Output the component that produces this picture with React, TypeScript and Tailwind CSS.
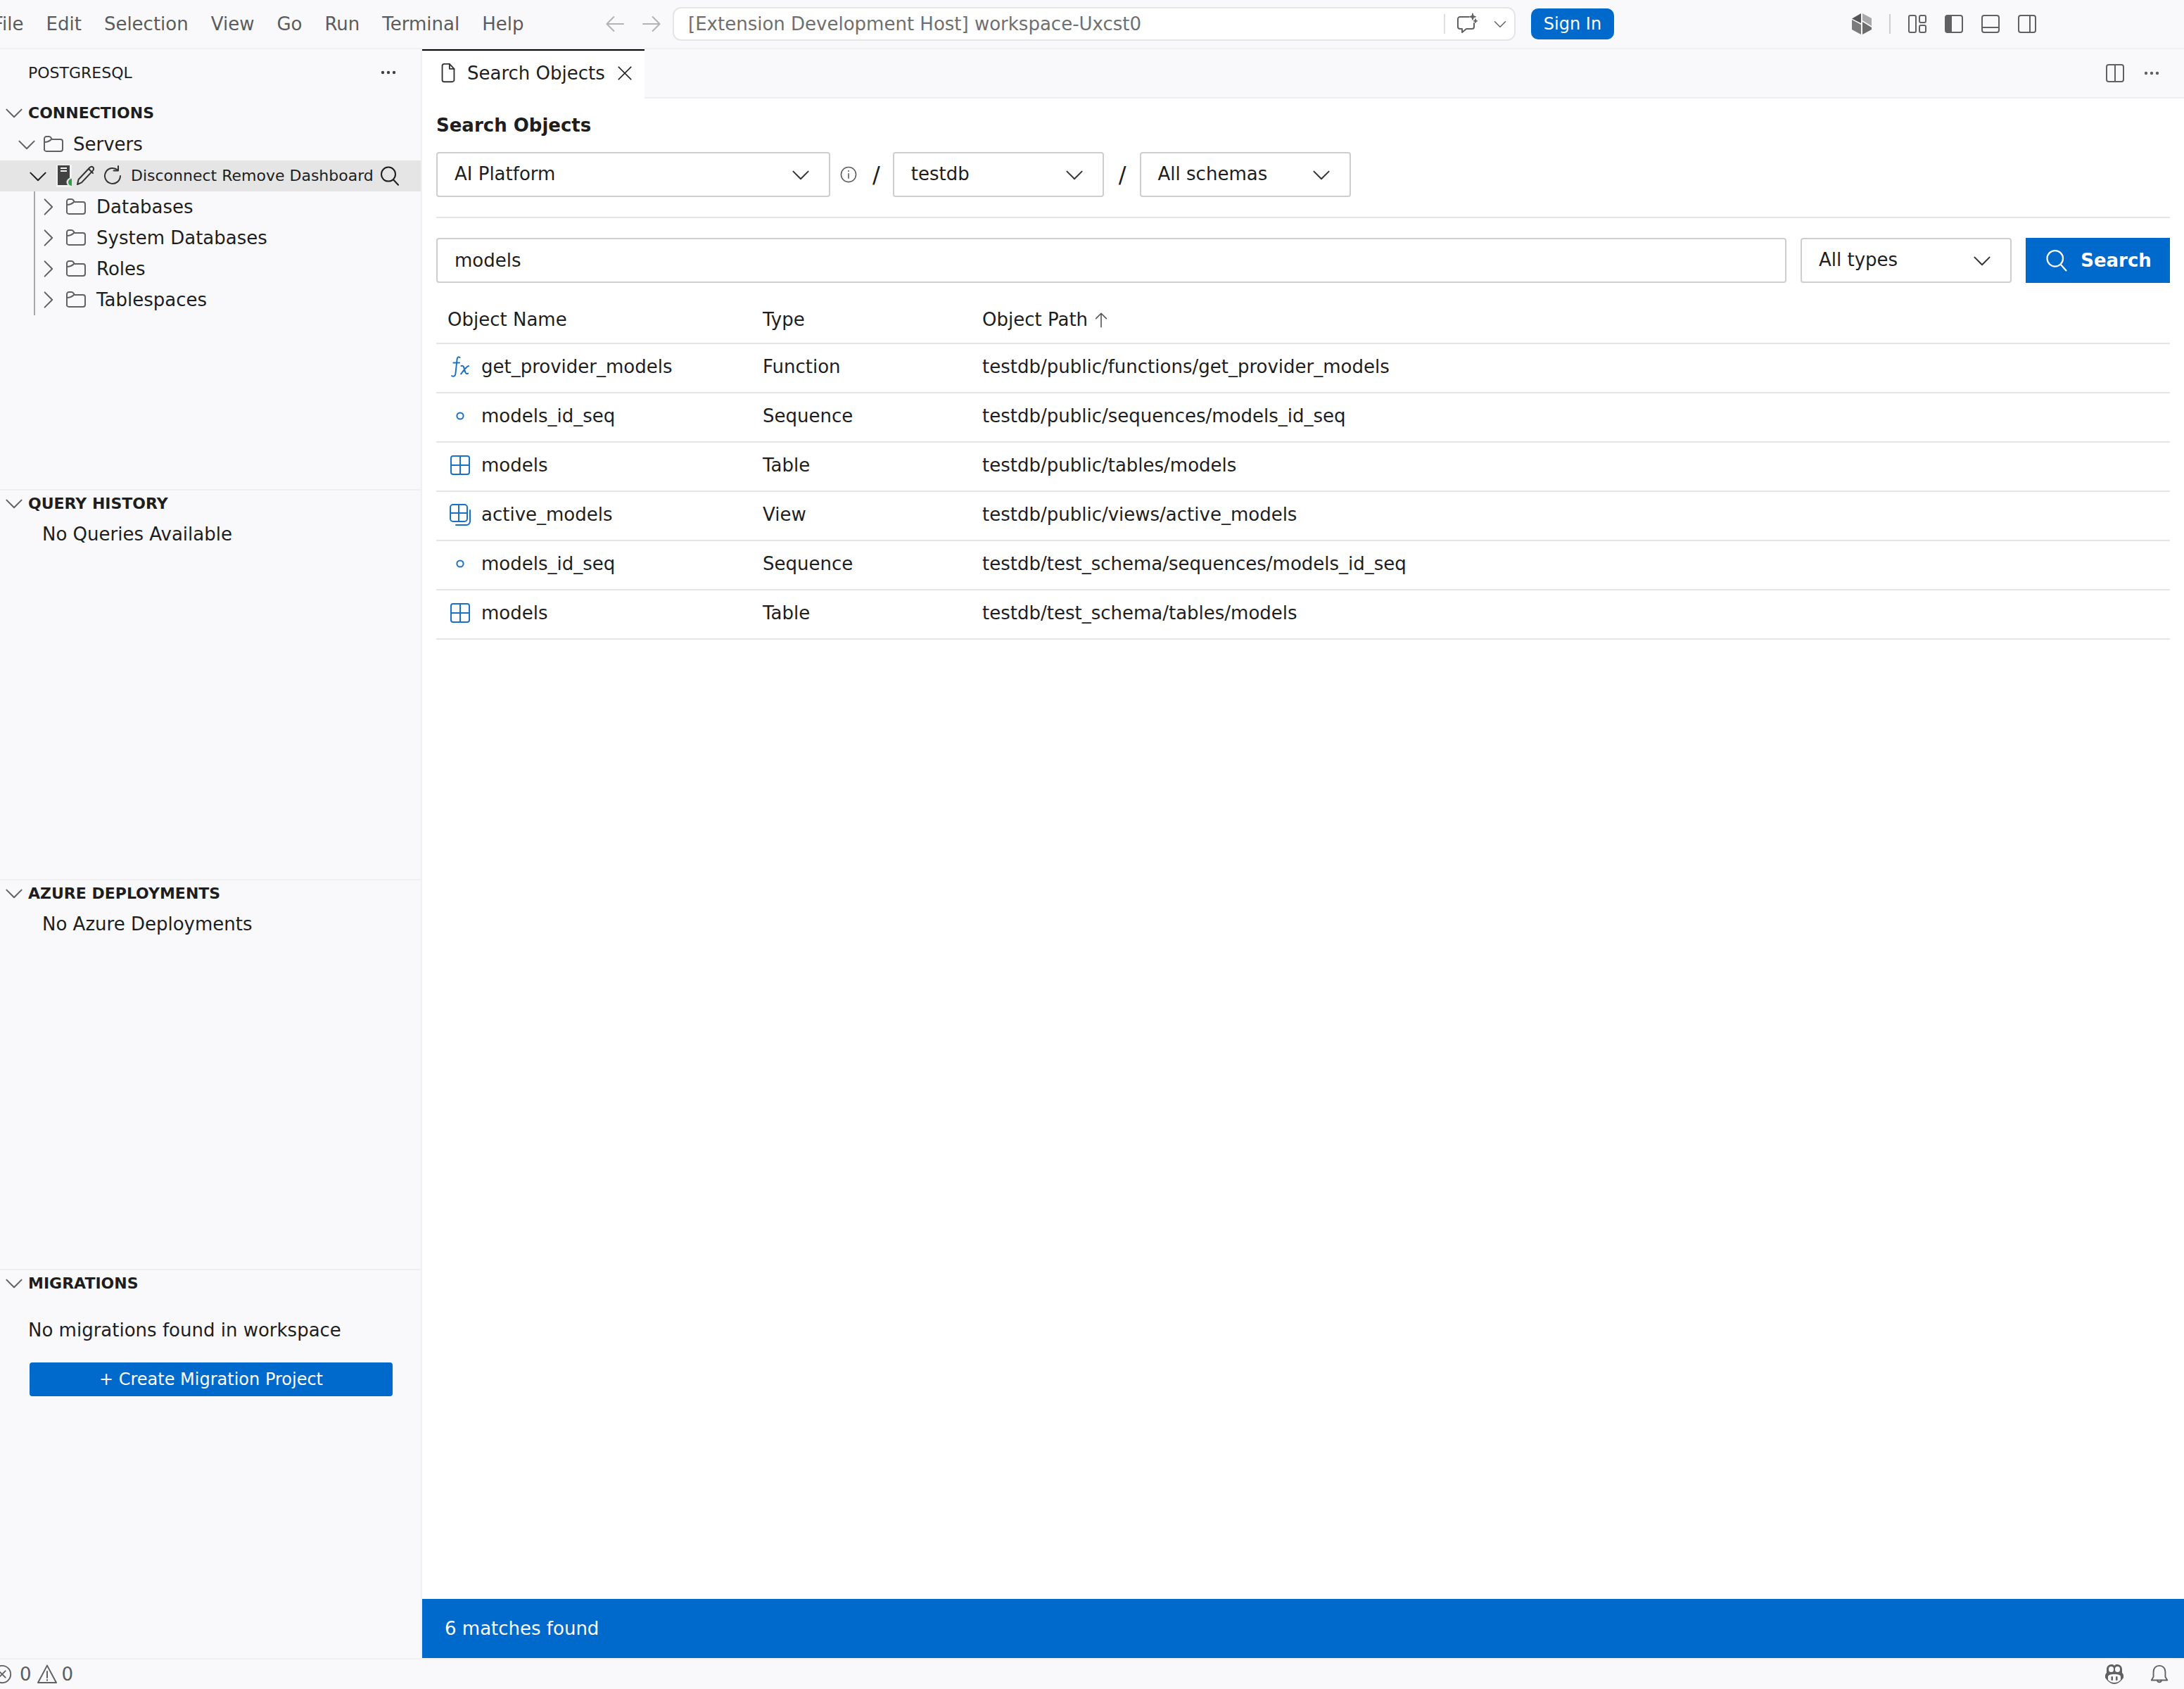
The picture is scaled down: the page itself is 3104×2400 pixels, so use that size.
import type { ReactNode } from 'react'

const GRAY = '#616161'
const BLUE = '#1a72c6'

function Icon({ children, size = 32, color = GRAY, className = '' }: { children: ReactNode; size?: number; color?: string; className?: string }) {
  return (
    <svg width={size} height={size} viewBox="0 0 16 16" fill="none" stroke={color} strokeWidth="1" strokeLinecap="round" strokeLinejoin="round" className={`shrink-0 ${className}`}>
      {children}
    </svg>
  )
}

const ChevronDown = ({ color = GRAY }: { color?: string }) => (
  <Icon color={color}><path d="M2.7 5.8 8 11.1l5.3-5.3" /></Icon>
)
const ChevronRight = () => (
  <Icon><path d="M5.8 2.7 11.1 8l-5.3 5.3" /></Icon>
)
const Folder = () => (
  <Icon><path d="M1.5 4a1.5 1.5 0 0 1 1.5-1.5h1.8c.6 0 1 .3 1.3.7l.9 1.3h6a1.5 1.5 0 0 1 1.5 1.5v5.5a1.5 1.5 0 0 1-1.5 1.5H3A1.5 1.5 0 0 1 1.5 12V4Z" /><path d="M1.5 6.5c2 0 3.500-.5 5-2" /></Icon>
)
const SearchGlyph = ({ color = '#1e1e1e', size = 32 }: { color?: string; size?: number }) => (
  <Icon color={color} size={size}><circle cx="7" cy="6.800" r="5" /><path d="m10.500 10.600 3.500 3.800" /></Icon>
)

function TableIcon() {
  return (
    <Icon color={BLUE}><rect x="1.500" y="1.500" width="13" height="13" rx="1.500" /><path d="M8 1.500v13M1.500 8h13" /></Icon>
  )
}
function ViewIcon() {
  return (
    <Icon color={BLUE}><rect x="1" y="1" width="12" height="12" rx="2" /><path d="M7 1v12M1 7h12M15 5v8a2.500 2.500 0 0 1-2.500 2.500H5" /></Icon>
  )
}
function SequenceIcon() {
  return <Icon color={BLUE}><circle cx="8" cy="8" r="2.300" /></Icon>
}
function FunctionIcon() {
  return (
    <Icon color={BLUE}>
      <path d="M7.800 1.500C6.800.7 6 1.300 5.800 2.800L4.700 13c-.2 1.700-1.300 2.300-2.700 1.500M3.200 5.300h4.300" />
      <path d="M8.800 7.500c1-.4 1.500 0 1.900 1.200l1 3.300c.3 1 .9 1.300 1.900.8M14 7.500c-1.500.5-3.500 3-5.400 5.700" />
    </Icon>
  )
}

function Section({ title, height, children }: { title: string; height?: string; children?: ReactNode }) {
  return (
    <section className={`flex flex-col border-t-2 border-[#f0f0f3] ${height ?? ''}`}>
      <div className="flex h-[36px] items-center gap-[4px] pl-[4px] text-[22px] font-bold text-[#1e1e1e]">
        <ChevronDown />
        <span>{title}</span>
      </div>
      {children}
    </section>
  )
}

function TreeRow({ label }: { label: string }) {
  return (
    <div className="flex h-[44px] items-center pl-[52px] text-[26px] text-[#1e1e1e]">
      <ChevronRight />
      <span className="ml-[8px]"><Folder /></span>
      <span className="ml-[13px]">{label}</span>
    </div>
  )
}

function Select({ label, width }: { label: string; width: string }) {
  return (
    <div className={`flex h-[64px] shrink-0 items-center justify-between rounded-[4px] border-2 border-[#cecece] bg-white pl-[24px] pr-[24px] text-[26px] text-[#1e1e1e] ${width}`}>
      <span className="-mt-[2px]">{label}</span>
      <ChevronDown color="#333333" />
    </div>
  )
}

const results = [
  { icon: <FunctionIcon />, name: 'get_provider_models', type: 'Function', path: 'testdb/public/functions/get_provider_models' },
  { icon: <SequenceIcon />, name: 'models_id_seq', type: 'Sequence', path: 'testdb/public/sequences/models_id_seq' },
  { icon: <TableIcon />, name: 'models', type: 'Table', path: 'testdb/public/tables/models' },
  { icon: <ViewIcon />, name: 'active_models', type: 'View', path: 'testdb/public/views/active_models' },
  { icon: <SequenceIcon />, name: 'models_id_seq', type: 'Sequence', path: 'testdb/test_schema/sequences/models_id_seq' },
  { icon: <TableIcon />, name: 'models', type: 'Table', path: 'testdb/test_schema/tables/models' },
]

const menus = ['File', 'Edit', 'Selection', 'View', 'Go', 'Run', 'Terminal', 'Help']

function TitleBar() {
  return (
    <header className="flex h-[70px] shrink-0 items-center border-b-2 border-[#f0f0f3] bg-[#f9f9fb] text-[26px]">
      <nav className="-ml-[26px] flex w-[884px] shrink-0 text-[#5c5c5c]">
        {menus.map(m => (
          <span key={m} className="px-[16px]">{m}</span>
        ))}
      </nav>
      <div className="flex w-[98px] shrink-0 items-center gap-[20px]">
        <Icon color="#b3b3b3"><path d="M14 8H2.500M7.200 3 2.200 8l5 5" /></Icon>
        <Icon color="#b3b3b3"><path d="M2 8h11.500M8.800 3l5 5-5 5" /></Icon>
      </div>
      <div className="flex h-[48px] w-[1198px] shrink-0 items-center rounded-[12px] border-2 border-[#e5e5e5] bg-white pl-[20px] pr-[8px] text-[#6f6f6f]">
        <span className="flex-1">[Extension Development Host] workspace-Uxcst0</span>
        <span className="h-[28px] w-[2px] bg-[#e0e0e0]" />
        <span className="ml-[15px]">
          <Icon>
            <path d="M9.300 3H3a1.500 1.500 0 0 0-1.500 1.500v5.500A1.500 1.500 0 0 0 3 11.500h1.500v2.500l3-2.500h4a1.500 1.500 0 0 0 1.500-1.500V7.500" />
            <path d="M12 .6l.6 1.700 1.700.6-1.700.6-.6 1.700-.6-1.700-1.700-.6 1.700-.6ZM14 4.500l.4 1 1 .4-1 .4-.4 1-.4-1-1-.4 1-.4Z" fill={GRAY} strokeWidth="0.500" />
          </Icon>
        </span>
        <span className="ml-[19px]">
          <Icon size={24}><path d="M3 5.800 8 10.800l5-5" /></Icon>
        </span>
      </div>
      <button className="ml-[22px] flex h-[44px] w-[118px] shrink-0 items-center justify-center rounded-[10px] bg-[#0069cc] text-[24px] text-white">
        Sign In
      </button>
      <div className="ml-[338px] flex shrink-0 items-center">
        <svg width="28" height="30" viewBox="0 0 28 30" className="shrink-0">
          <path d="M13 0v14L0 7.500 13 0Z" fill="#555555" />
          <path d="M0 9l13 7v14L0 23V9Z" fill="#7b7b7b" />
          <path d="M15 0l13 7v11L15 10V0Z" fill="#a9a9a9" />
          <path d="M15 12l13 8v3L15 30V12Z" fill="#6c6c6c" />
        </svg>
        <span className="ml-[25px] h-[28px] w-[2px] bg-[#cfcfcf]" />
        <div className="ml-[22px] flex items-center gap-[20px]">
          <Icon>
            <rect x="2" y="2" width="5" height="12" rx="1" />
            <rect x="9.500" y="2" width="4.500" height="5" rx="1" />
            <rect x="9.500" y="9" width="4.500" height="5" rx="1" />
          </Icon>
          <Icon>
            <rect x="2" y="2" width="12" height="12" rx="1.500" />
            <path d="M3 2.500h3v11H3Z" fill={GRAY} />
          </Icon>
          <Icon>
            <rect x="2" y="2" width="12" height="12" rx="1.500" />
            <path d="M2 10.500h12" />
          </Icon>
          <Icon>
            <rect x="2" y="2" width="12" height="12" rx="1.500" />
            <path d="M10 2v12" />
          </Icon>
        </div>
      </div>
    </header>
  )
}

function Sidebar() {
  return (
    <aside className="flex w-[600px] shrink-0 flex-col border-r-2 border-[#f0f0f3] bg-[#f9f9fc] text-[#1e1e1e]">
      <div className="flex h-[66px] shrink-0 items-center justify-between pl-[40px] pr-[30px] text-[22px]">
        <span>POSTGRESQL</span>
        <Icon color="#424242">
          <circle cx="4" cy="8" r=".6" fill="#424242" />
          <circle cx="8" cy="8" r=".6" fill="#424242" />
          <circle cx="12" cy="8" r=".6" fill="#424242" />
        </Icon>
      </div>

      <section className="flex h-[559px] shrink-0 flex-col">
        <div className="mt-[2px] flex h-[44px] items-center gap-[4px] pl-[4px] text-[22px] font-bold">
          <ChevronDown />
          <span>CONNECTIONS</span>
        </div>
        <div className="flex h-[46px] items-center pl-[22px] text-[26px]">
          <ChevronDown />
          <span className="ml-[6px]"><Folder /></span>
          <span className="ml-[12px]">Servers</span>
        </div>
        <div className="flex h-[44px] items-center bg-[#e5e5e5] pl-[38px] text-[22px]">
          <ChevronDown color="#1e1e1e" />
          <svg width="22" height="32" viewBox="0 0 22 32" className="ml-[10px] shrink-0">
            <rect width="22" height="32" fill="#f3f3f3" />
            <rect x="2" y="1" width="17" height="28" fill="#424242" />
            <path d="M6 5h9M6 9h9" stroke="#f3f3f3" strokeWidth="2" />
            <circle cx="21" cy="25" r="6.500" fill="#e5e5e5" />
            <circle cx="22" cy="25" r="5" fill="#2ea043" />
          </svg>
          <span className="ml-[4px]">
            <Icon color="#333333">
              <path d="M2 14l.8-3.500 8-8.500c.7-.7 1.700-.7 2.300-.1s.6 1.600-.1 2.300l-8 8.500L2 14Z" />
              <path d="M10 3l3 3" />
            </Icon>
          </span>
          <span className="ml-[6px]">
            <Icon color="#333333">
              <path d="M13.500 8a5.500 5.500 0 1 1-1.800-4.100" />
              <path d="M12 1v3.200H8.800" />
            </Icon>
          </span>
          <span className="-mt-[2px] ml-[10px] whitespace-nowrap">Disconnect Remove Dashboard</span>
          <span className="ml-[7px]"><SearchGlyph /></span>
        </div>
        <div className="ml-[48px] flex h-[176px] flex-col border-l-2 border-[#a8a8a8]">
          <div className="-ml-[50px]">
            <TreeRow label="Databases" />
            <TreeRow label="System Databases" />
            <TreeRow label="Roles" />
            <TreeRow label="Tablespaces" />
          </div>
        </div>
      </section>

      <Section title="QUERY HISTORY" height="h-[554px] shrink-0">
        <p className="mt-[4px] pl-[60px] text-[26px] leading-[44px]">No Queries Available</p>
      </Section>

      <Section title="AZURE DEPLOYMENTS" height="h-[554px] shrink-0">
        <p className="mt-[4px] pl-[60px] text-[26px] leading-[44px]">No Azure Deployments</p>
      </Section>

      <Section title="MIGRATIONS" height="flex-1">
        <p className="mt-[27px] pl-[40px] text-[26px] leading-[44px]">No migrations found in workspace</p>
        <button className="ml-[42px] mt-[24px] h-[48px] w-[516px] rounded-[4px] bg-[#0069cc] text-[24px] text-white">
          + Create Migration Project
        </button>
      </Section>
    </aside>
  )
}

function EditorTabs() {
  return (
    <div className="flex h-[70px] shrink-0 items-stretch justify-between bg-[#f9f9fb]">
      <div className="flex w-[316px] items-center border-t-2 border-black bg-white pb-[4px] pl-[22px] text-[26px] text-[#1e1e1e]">
        <Icon color="#333333" size={30}>
          <path d="M3.500 2.500A1.500 1.500 0 0 1 5 1h4l3.500 3.700V13A1.500 1.500 0 0 1 11 14.500H5A1.500 1.500 0 0 1 3.500 13V2.500Z" />
          <path d="M9 1v3.700h3.500" />
        </Icon>
        <span className="ml-[12px]">Search Objects</span>
        <span className="ml-[14px]">
          <Icon color="#1e1e1e" size={28}><path d="M3 3l10 10M13 3 3 13" /></Icon>
        </span>
      </div>
      <div className="flex flex-1 items-center justify-end gap-[20px] border-b-2 border-[#efeff2] pr-[30px]">
        <Icon>
          <rect x="2" y="2" width="12" height="12" rx="1.500" />
          <path d="M8 2v12" />
        </Icon>
        <Icon>
          <circle cx="4" cy="8" r=".6" fill={GRAY} />
          <circle cx="8" cy="8" r=".6" fill={GRAY} />
          <circle cx="12" cy="8" r=".6" fill={GRAY} />
        </Icon>
      </div>
    </div>
  )
}

function SearchPanel() {
  return (
    <main className="flex min-w-0 flex-1 flex-col bg-white">
      <EditorTabs />
      <div className="flex flex-1 flex-col px-[20px] pt-[20px] text-[#1e1e1e]">
        <h1 className="h-[36px] text-[26px] font-bold leading-[36px]">Search Objects</h1>

        <div className="mt-[20px] flex items-center">
          <Select label="AI Platform" width="w-[560px]" />
          <span className="ml-[13px]">
            <Icon size={26}>
              <circle cx="8" cy="8" r="6.500" />
              <path d="M8 7.200v4M8 4.600v.6" />
            </Icon>
          </span>
          <span className="ml-[21px] text-[32px] leading-none">/</span>
          <span className="ml-[18px]"><Select label="testdb" width="w-[300px]" /></span>
          <span className="ml-[21px] text-[32px] leading-none">/</span>
          <span className="ml-[19px]"><Select label="All schemas" width="w-[300px]" /></span>
        </div>

        <div className="mt-[28px] h-[2px] bg-[#e5e5e5]" />

        <div className="mt-[28px] flex gap-[20px]">
          <input
            readOnly
            value="models"
            className="h-[64px] min-w-0 flex-1 rounded-[4px] border-2 border-[#cecece] bg-white pl-[24px] text-[26px] text-[#1e1e1e] outline-none"
          />
          <Select label="All types" width="w-[300px]" />
          <button className="flex h-[64px] w-[205px] shrink-0 items-center justify-center gap-[16px] bg-[#0069cc] text-[26px] font-bold text-white">
            <SearchGlyph color="#ffffff" size={36} />
            Search
          </button>
        </div>

        <div className="grid h-[87px] grid-cols-[448px_312px_1fr] items-center border-b-2 border-[#e5e5e5] pt-[20px] text-[26px]">
          <span className="pl-[16px]">Object Name</span>
          <span className="pl-[16px]">Type</span>
          <span className="flex items-center gap-[6px] pl-[16px]">
            Object Path
            <Icon size={26} color="#555555"><path d="M8 14V2M3.500 6.500 8 2l4.500 4.500" /></Icon>
          </span>
        </div>

        {results.map((r, i) => (
          <div key={i} className="grid h-[70px] grid-cols-[448px_312px_1fr] items-center border-b-2 border-[#e5e5e5] pb-[4px] text-[26px]">
            <span className="flex items-center gap-[14px] pl-[18px]">
              {r.icon}
              {r.name}
            </span>
            <span className="pl-[16px]">{r.type}</span>
            <span className="pl-[16px]">{r.path}</span>
          </div>
        ))}
      </div>
      <footer className="flex h-[84px] shrink-0 items-center bg-[#0069cc] pl-[32px] text-[26px] text-white">
        6 matches found
      </footer>
    </main>
  )
}

function StatusBar() {
  return (
    <footer className="flex h-[44px] shrink-0 items-center justify-between border-t-2 border-[#f0f0f3] bg-[#f9f9fb] text-[26px] text-[#5c5c5c]">
      <div className="-ml-[12px] flex items-center">
        <Icon size={30}><circle cx="8" cy="8" r="6.500" /><path d="m5.500 5.500 5 5M10.500 5.500l-5 5" /></Icon>
        <span className="ml-[10px]">0</span>
        <span className="ml-[6px]">
          <Icon size={32}><path d="M8 1.800 14.500 14h-13L8 1.800Z" /><path d="M8 6v4.500M8 12v.4" /></Icon>
        </span>
        <span className="ml-[5px]">0</span>
      </div>
      <div className="mr-[20px] flex items-center gap-[32px]">
        <svg width="34" height="30" viewBox="0 0 34 30" className="shrink-0">
          <path d="M4 17c0-2 1-3 2-4V8c0-4 3-7 7-7 2 0 3 .5 4 2 1-1.500 2-2 4-2 4 0 7 3 7 7v5c1 1 2 2 2 4v3c-4 6-9 9-13 9H17c-4 0-9-3-13-9v-3Z" fill={GRAY} />
          <rect x="9" y="4" width="7" height="8" rx="3.500" fill="#f9f9fb" />
          <rect x="18" y="4" width="7" height="8" rx="3.500" fill="#f9f9fb" />
          <path d="M8 19c0-3 3-4 9-4s9 1 9 4v4c-3 3-6 4-9 4s-6-1-9-4v-4Z" fill="#f9f9fb" />
          <rect x="12.500" y="18" width="2.500" height="6" rx="1.200" fill={GRAY} />
          <rect x="19" y="18" width="2.500" height="6" rx="1.200" fill={GRAY} />
        </svg>
        <Icon size={30}>
          <path d="M8 1.500c-2.800 0-4.500 2-4.500 4.700V10L2 12.500h12L12.500 10V6.200C12.500 3.500 10.800 1.500 8 1.500Z" />
          <path d="M6.500 12.500a1.500 1.500 0 0 0 3 0" />
        </Icon>
      </div>
    </footer>
  )
}

export default function App() {
  return (
    <div className="flex h-[2400px] w-[3104px] flex-col overflow-hidden bg-white font-['DejaVu_Sans',sans-serif]">
      <TitleBar />
      <div className="flex min-h-0 flex-1">
        <Sidebar />
        <SearchPanel />
      </div>
      <StatusBar />
    </div>
  )
}
